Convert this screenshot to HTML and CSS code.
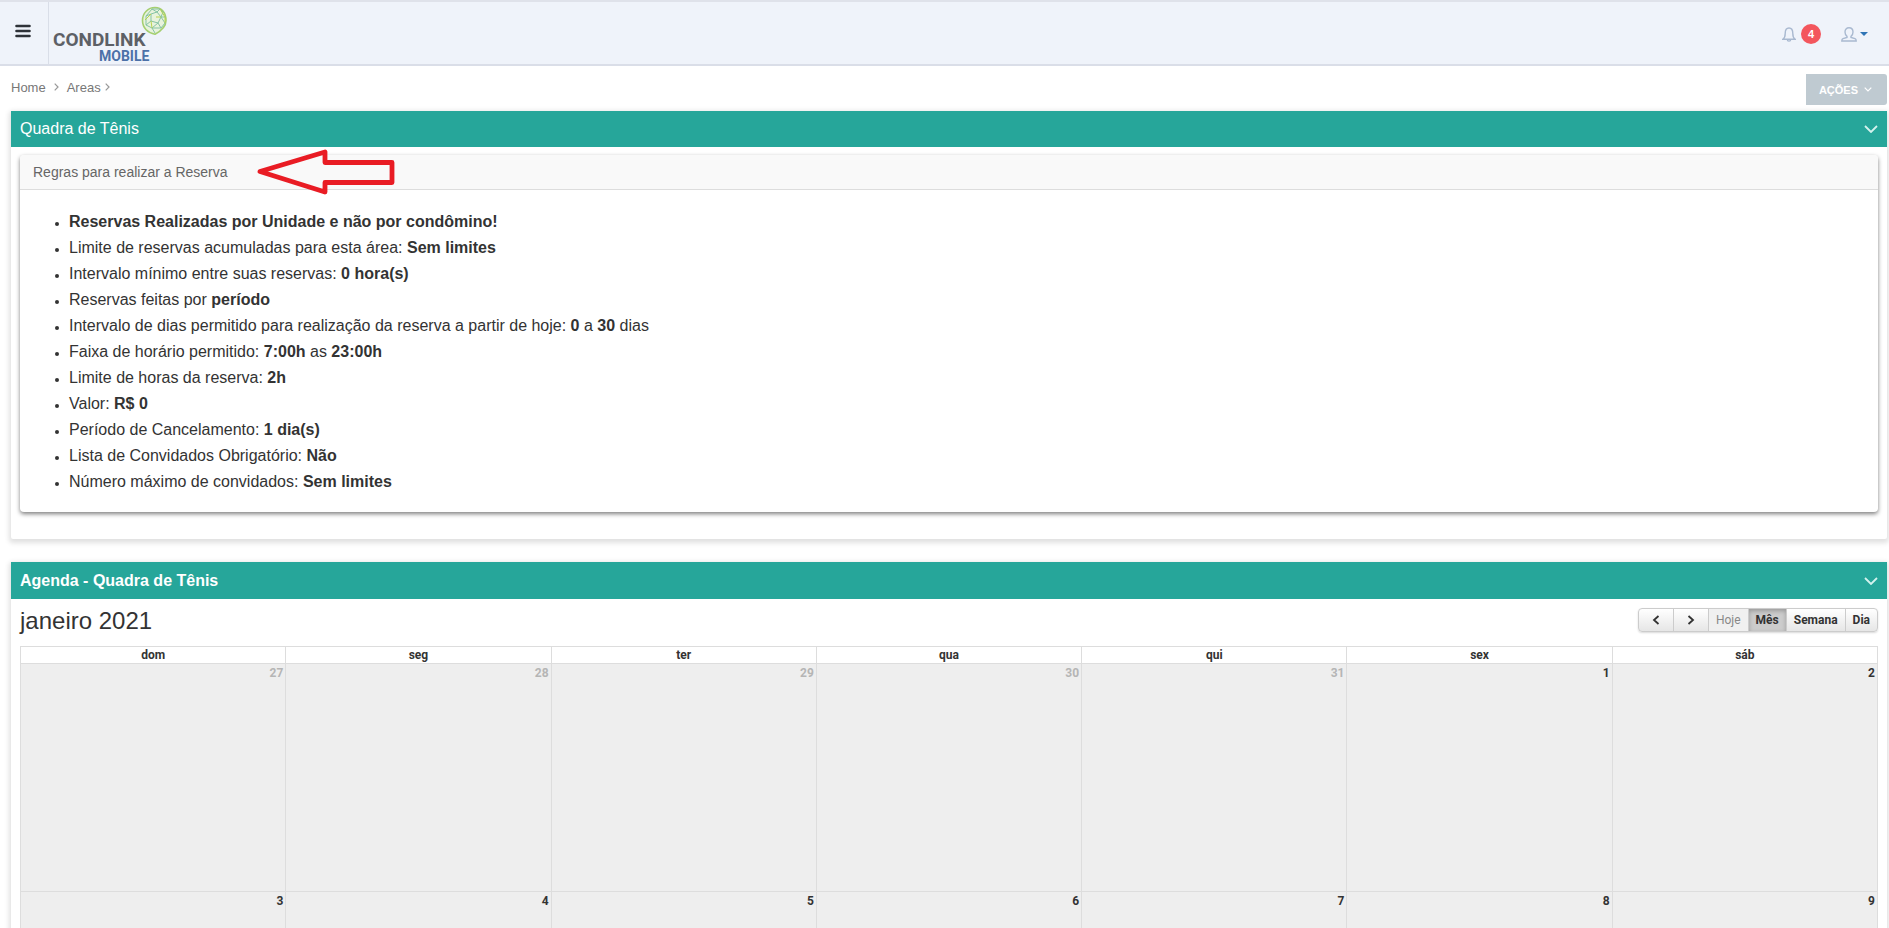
FILE: index.html
```html
<!DOCTYPE html>
<html lang="pt-BR">
<head>
    <meta charset="utf-8" />
    <meta name="viewport" content="width=device-width, initial-scale=1" />
    <title>Condlink Mobile - Quadra de Tênis</title>
    <link rel="stylesheet" href="styles.css">
</head>
<body>
    <header class="topbar">
        <button type="button" class="menu-toggle" aria-label="Menu">
            <svg width="16" height="14" viewBox="0 0 16 14"><path d="M1.500 2h13M1.500 7h13M1.500 12h13" stroke="#2e3238" stroke-width="2.600" stroke-linecap="round"/></svg>
        </button>
        <a href="#" class="logo" aria-label="Condlink Mobile">
            <svg width="118" height="66" viewBox="0 0 118 66">
                <text class="logo-name" x="4" y="44">CONDLINK</text>
                <text class="logo-sub" x="50" y="59">MOBILE</text>
                <g fill="none" stroke-linejoin="round">
                    <path d="M106 32.200C99 31 93.500 26 93.500 18.500C93.500 11 99 5.500 106 5.500S117 11 117 18.500C117 25 112 29 106 32.200Z" fill="#e8f3dc" stroke="#a5cf70" stroke-width="1.600"/>
                    <path d="M102 12l6-2 4 5-3 6-7-2zM102 12l-5 2M108 10l3-3M112 15l5 0M109 21l3 5M102 19l-5 4M108 10l-5-3M109 21l-6 5-6-3M103 26l3 5M112 15l2-5M112 26l4-5-4-6M97 14v9M97 14l6-7 8 0 3 3M103 26l9 0" stroke="#86c3a4" stroke-width="1"/>
                    <path d="M102 19l1 7M112 15l-5 0M96 18l6-6M111 7l5 8v6" stroke="#b9d34f" stroke-width="1"/>
                </g>
            </svg>
        </a>
        <nav class="top-menu">
            <button type="button" class="top-item" aria-label="Notificações">
                <svg width="14" height="15" viewBox="0 0 14 15" fill="none" stroke="#a9b9d0" stroke-width="1.400"><path d="M1 12.200C2.800 11 3.200 9.500 3.200 6.500C3.200 3 4.500 1 7 1s3.800 2 3.800 5.500c0 3 .4 4.500 2.200 5.700zM5.300 12.500c0 2.200 3.400 2.200 3.400 0"/></svg>
                <span class="badge">4</span>
            </button>
            <button type="button" class="top-item user" aria-label="Usuário">
                <svg width="16" height="15" viewBox="0 0 16 15" fill="none" stroke="#a9b9d0" stroke-width="1.400"><path d="M8 .8c2.500 0 4 1.700 4 4.200 0 2-.8 3.500-2 4.300v1.200l4 1.200c1 .4 1.200 1 1.200 2.300H.8c0-1.300.2-1.900 1.200-2.300l4-1.200V9.300C4.800 8.500 4 7 4 5 4 2.500 5.500.8 8 .8z"/></svg>
                <svg width="8" height="4" viewBox="0 0 8 4"><path d="M0 0h8L4 4z" fill="#2f74b5"/></svg>
            </button>
        </nav>
    </header>

    <main class="content">
        <div class="page-bar">
            <nav class="breadcrumb">
                <a href="#">Home</a>
                <svg width="5" height="8" viewBox="0 0 5 8"><path d="M.7.7L4 4 .7 7.300" fill="none" stroke="#999" stroke-width="1.200"/></svg>
                <a href="#" class="current">Areas</a>
                <svg width="5" height="8" viewBox="0 0 5 8"><path d="M.7.7L4 4 .7 7.300" fill="none" stroke="#999" stroke-width="1.200"/></svg>
            </nav>
            <button type="button" class="actions">AÇÕES
                <svg width="8" height="5" viewBox="0 0 8 5"><path d="M.7.7L4 4 7.300.7" fill="none" stroke="#fff" stroke-width="1.200"/></svg>
            </button>
        </div>

        <section class="portlet">
            <div class="portlet-title">
                <h2>Quadra de Tênis</h2>
                <button type="button" class="collapse" aria-label="Recolher">
                    <svg width="14" height="8" viewBox="0 0 14 8"><path d="M1 1l6 6 6-6" fill="none" stroke="#d4f2ee" stroke-width="1.800"/></svg>
                </button>
            </div>
            <div class="portlet-body">
                <div class="card">
                    <div class="card-header">
                        Regras para realizar a Reserva
                        <svg class="arrow" width="140" height="46" viewBox="0 0 140 46"><path d="M5 22.500L70 3v10.500h67v20H70V43z" fill="none" stroke="#e91c24" stroke-width="4.800" stroke-linejoin="round"/></svg>
                    </div>
                    <ul class="rules">
                        <li><b>Reservas Realizadas por Unidade e não por condômino!</b></li>
                        <li>Limite de reservas acumuladas para esta área: <b>Sem limites</b></li>
                        <li>Intervalo mínimo entre suas reservas: <b>0 hora(s)</b></li>
                        <li>Reservas feitas por <b>período</b></li>
                        <li>Intervalo de dias permitido para realização da reserva a partir de hoje: <b>0</b> a <b>30</b> dias</li>
                        <li>Faixa de horário permitido: <b>7:00h</b> as <b>23:00h</b></li>
                        <li>Limite de horas da reserva: <b>2h</b></li>
                        <li>Valor: <b>R$ 0</b></li>
                        <li>Período de Cancelamento: <b>1 dia(s)</b></li>
                        <li>Lista de Convidados Obrigatório: <b>Não</b></li>
                        <li>Número máximo de convidados: <b>Sem limites</b></li>
                    </ul>
                </div>
            </div>
        </section>

        <section class="portlet">
            <div class="portlet-title strong">
                <h2>Agenda - Quadra de Tênis</h2>
                <button type="button" class="collapse" aria-label="Recolher">
                    <svg width="14" height="8" viewBox="0 0 14 8"><path d="M1 1l6 6 6-6" fill="none" stroke="#d4f2ee" stroke-width="1.800"/></svg>
                </button>
            </div>
            <div class="calendar">
                <div class="calendar-toolbar">
                    <h3>janeiro 2021</h3>
                    <div class="button-group">
                        <button type="button" class="nav" aria-label="Anterior"><svg width="8" height="10" viewBox="0 0 8 10"><path d="M6.500 1L2 5l4.500 4" fill="none" stroke="#333" stroke-width="1.800"/></svg></button>
                        <button type="button" class="nav" aria-label="Próximo"><svg width="8" height="10" viewBox="0 0 8 10"><path d="M1.500 1L6 5 1.500 9" fill="none" stroke="#333" stroke-width="1.800"/></svg></button>
                        <button type="button" disabled>Hoje</button>
                        <button type="button" class="active">Mês</button>
                        <button type="button">Semana</button>
                        <button type="button">Dia</button>
                    </div>
                </div>
                <table>
                    <thead>
                        <tr><th>dom</th><th>seg</th><th>ter</th><th>qua</th><th>qui</th><th>sex</th><th>sáb</th></tr>
                    </thead>
                    <tbody>
                        <tr>
                            <td class="other">27</td><td class="other">28</td><td class="other">29</td><td class="other">30</td><td class="other">31</td><td>1</td><td>2</td>
                        </tr>
                        <tr>
                            <td>3</td><td>4</td><td>5</td><td>6</td><td>7</td><td>8</td><td>9</td>
                        </tr>
                    </tbody>
                </table>
            </div>
        </section>
    </main>
</body>
</html>
```

FILE: styles.css
```css
* {
    box-sizing: border-box;
}
body {
    margin: 0;
    font-family: "Liberation Sans", Arial, sans-serif;
    font-size: 14px;
    color: #333;
    background-color: #fff;
}
h2, h3 {
    margin: 0;
    font-weight: normal;
}
button {
    font: inherit;
    border: 0;
    padding: 0;
    background: none;
    cursor: pointer;
}
a {
    color: inherit;
    text-decoration: none;
}
svg {
    display: block;
    flex: none;
}

/* top bar */
.topbar {
    display: flex;
    height: 66px;
    margin-bottom: 8px;
    background-color: #eff3fa;
    border-top: 2px solid #dfe2ea;
    border-bottom: 2px solid #dadee8;
}
.menu-toggle {
    width: 49px;
    padding: 0 0 4px 15px;
    border-right: 1px solid #d9dee8;
}
.logo-name, .logo-sub {
    font-family: Roboto, sans-serif;
    font-weight: bold;
}
.logo-name {
    font-size: 19px;
    fill: #5d6066;
}
.logo-sub {
    font-size: 14px;
    fill: #4c71a8;
}
.top-menu {
    display: flex;
    align-items: center;
    gap: 20px;
    margin-left: auto;
    padding: 2px 21px 0 0;
}
.top-item {
    display: flex;
    align-items: center;
    gap: 5px;
}
.top-item.user {
    gap: 3px;
}
.badge {
    width: 20px;
    border-radius: 50%;
    background-color: #f3565d;
    color: #fff;
    font-size: 11px;
    font-weight: bold;
    line-height: 20px;
}

/* breadcrumb and actions */
.content {
    padding: 0 2px 0 11px;
}
.page-bar {
    display: flex;
    justify-content: space-between;
    height: 37px;
}
.breadcrumb {
    display: flex;
    align-items: center;
    gap: 8px;
    height: 26px;
    font-size: 13px;
    color: #777;
}
.breadcrumb .current {
    margin-right: -4px;
}
.actions {
    display: flex;
    align-items: center;
    gap: 6px;
    height: 31px;
    padding: 0 15px 0 13px;
    border-radius: 0 3px 3px 0;
    background-color: #bfcad1;
    color: #fff;
    font-size: 11px;
    font-weight: bold;
}

/* portlets */
.portlet {
    margin-bottom: 23px;
    background-color: #fff;
    box-shadow: 0 2px 5px 2px rgba(0, 0, 0, 0.12);
    border-radius: 2px;
}
.portlet-title {
    display: flex;
    align-items: center;
    justify-content: space-between;
    height: 36px;
    padding: 0 9px;
    background-color: #26a69a;
    color: #fff;
}
.portlet-title.strong {
    height: 37px;
}
.portlet-title h2 {
    font-size: 16px;
}
.strong h2 {
    font-weight: bold;
}
.portlet-body {
    padding: 8px 9px 27px;
}
.card {
    border-radius: 4px;
    box-shadow: 0 2px 4px rgba(0, 0, 0, 0.5);
}
.card-header {
    position: relative;
    padding: 0 13px;
    line-height: 34px;
    border-bottom: 1px solid #ddd;
    border-radius: 4px 4px 0 0;
    background-color: #f9f9f9;
    color: #666;
}
.arrow {
    position: absolute;
    left: 235px;
    top: -6px;
}
.rules {
    margin: 0;
    padding: 19px 0 17px 49px;
    font-size: 16px;
    line-height: 26px;
}
.rules li::marker {
    font-size: 12px;
}

/* calendar */
.calendar {
    padding: 9px 9px 20px;
    font-family: Roboto, sans-serif;
    font-size: 12px;
}
.calendar-toolbar {
    display: flex;
    align-items: flex-start;
    justify-content: space-between;
    height: 38px;
}
.calendar-toolbar h3 {
    font-family: "Liberation Sans", Arial, sans-serif;
    font-size: 24px;
    line-height: 26px;
}
.button-group {
    display: flex;
    height: 24px;
    border: 1px solid #ccc;
    border-radius: 4px;
    background: linear-gradient(#fff, #e6e6e6);
    box-shadow: 0 1px 2px rgba(0, 0, 0, 0.15);
}
.button-group button {
    padding: 0 7px;
    font-weight: bold;
    color: #333;
    border-left: 1px solid #ccc;
}
.button-group .nav {
    padding: 0 13px;
}
.button-group button:first-child {
    border-left: 0;
}
.button-group button:disabled {
    font-weight: normal;
    color: #888;
    background-color: #f0f0f0;
}
.button-group .active {
    background-color: #ccc;
    box-shadow: inset 0 2px 4px rgba(0, 0, 0, 0.25);
}
table {
    width: 100%;
    border-collapse: collapse;
    table-layout: fixed;
}
th, td {
    border: 1px solid #ddd;
}
th {
    height: 17px;
    padding: 0;
    line-height: 16px;
}
td {
    height: 228px;
    padding: 2px;
    background-color: #eee;
    font-weight: bold;
    line-height: 14px;
    text-align: right;
    vertical-align: top;
}
.other {
    color: #b5b5b5;
}
```
